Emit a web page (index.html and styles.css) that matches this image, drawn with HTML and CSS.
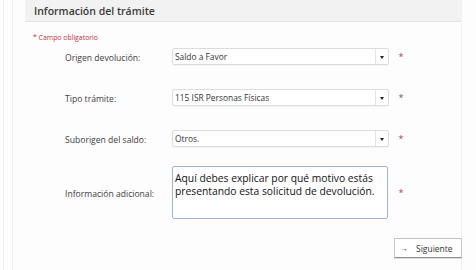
FILE: index.html
```html
<!DOCTYPE html>
<html lang="es">
<head>
<meta charset="utf-8">
<link rel="stylesheet" href="styles.css">
</head>
<body>
<div class="outer">
  <div class="inner">
    <div class="panel">
      <div class="panel-head">Información del trámite</div>
      <div class="panel-body">
        <div class="req-note">* Campo obligatorio</div>
        <div class="row">
          <label class="lbl">Origen devolución:</label>
          <div class="select"><span class="sel-text">Saldo a Favor</span><span class="sel-arrow"><i class="tri"></i></span></div>
          <span class="star">*</span>
        </div>
        <div class="row">
          <label class="lbl">Tipo trámite:</label>
          <div class="select"><span class="sel-text">115 ISR Personas Físicas</span><span class="sel-arrow"><i class="tri"></i></span></div>
          <span class="star">*</span>
        </div>
        <div class="row">
          <label class="lbl">Suborigen del saldo:</label>
          <div class="select"><span class="sel-text">Otros.</span><span class="sel-arrow"><i class="tri"></i></span></div>
          <span class="star">*</span>
        </div>
        <div class="row row-ta">
          <label class="lbl">Información adicional:</label>
          <div class="textarea">Aquí debes explicar por qué motivo estás presentando esta solicitud de devolución.</div>
          <span class="star">*</span>
        </div>
        <div class="actions">
          <button class="btn"><span class="btn-arrow">&#8594;</span>Siguiente</button>
        </div>
      </div>
    </div>
  </div>
</div>
</body>
</html>
```

FILE: styles.css
```css
html, body {
  margin: 0;
  padding: 0;
  background: #fdfdfd;
  font-family: "Open Sans", "Noto Sans", sans-serif;
  color: #3a3a3a;
}
.outer {
  margin-left: 3px;
  height: 270px;
  border-left: 1px solid #ececec;
  padding-left: 8px;
}
.inner {
  height: 270px;
  border-left: 1px solid #efefef;
  padding-left: 12px;
}
.panel {
  width: 436px;
  height: 270px;
  border-right: 1px solid #f0f0f0;
}
.panel-head {
  height: 21px;
  line-height: 23px;
  background: #f2f2f2;
  border-bottom: 1px solid #e4e4e4;
  padding-left: 9px;
  font-size: 10.5px;
  font-weight: 600;
  color: #3b3b3b;
}
.panel-body {
  padding: 0 0 0 8px;
}
.req-note {
  margin-top: 11px;
  height: 9px;
  line-height: 9px;
  font-size: 6.9px;
  color: #c0303c;
}
.row {
  display: grid;
  grid-template-columns: 32px 107px 217px 26px;
  align-items: center;
  margin-top: 6px;
  height: 17px;
}
.row + .row {
  margin-top: 24px;
}
.row.row-ta {
  margin-top: 19px;
  height: 53px;
}
.lbl {
  grid-column: 2;
  font-size: 8.6px;
  color: #404040;
  padding-top: 3px;
}
.select {
  grid-column: 3;
  box-sizing: border-box;
  height: 17px;
  display: flex;
  align-items: stretch;
  background: #fff;
  border: 1px solid #dcdcdc;
  border-radius: 2px;
  box-shadow: 0 1px 1px rgba(0,0,0,0.04);
}
.sel-text {
  flex: 1;
  font-size: 8.4px;
  line-height: 15px;
  padding-left: 2px;
  color: #333;
  white-space: nowrap;
}
.sel-arrow {
  width: 12px;
  border-left: 1px solid #e6e6e6;
  display: flex;
  align-items: center;
  justify-content: center;
}
.tri {
  display: block;
  width: 0;
  height: 0;
  border-left: 2px solid transparent;
  border-right: 2px solid transparent;
  border-top: 3px solid #222;
  margin-top: 1px;
}
.star {
  grid-column: 4;
  text-align: center;
  font-size: 9px;
  color: #b0384a;
  line-height: 10px;
  padding-top: 1px;
  padding-right: 2px;
}
.textarea {
  grid-column: 3;
  box-sizing: border-box;
  width: 216px;
  height: 53px;
  border: 1px solid #9db2d4;
  border-radius: 2px;
  background: #fff;
  padding: 5px 1px 0 2px;
  font-size: 10.3px;
  line-height: 13px;
  color: #111;
}
.actions {
  margin-top: 19px;
  display: flex;
  justify-content: flex-end;
}
.btn {
  box-sizing: border-box;
  width: 68px;
  height: 20px;
  background: #fff;
  border: 1px solid #c4c4c4;
  border-bottom-color: #8e8e8e;
  border-radius: 1px;
  font-family: "Open Sans", "Noto Sans", sans-serif;
  font-size: 8.5px;
  color: #333;
  padding: 0 0 0 6px;
  display: flex;
  align-items: center;
  box-shadow: 0 1px 0 rgba(0,0,0,0.12);
  margin-right: -1px;
}
.btn-arrow {
  font-size: 7px;
  margin-right: 8px;
  color: #111;
}
```
